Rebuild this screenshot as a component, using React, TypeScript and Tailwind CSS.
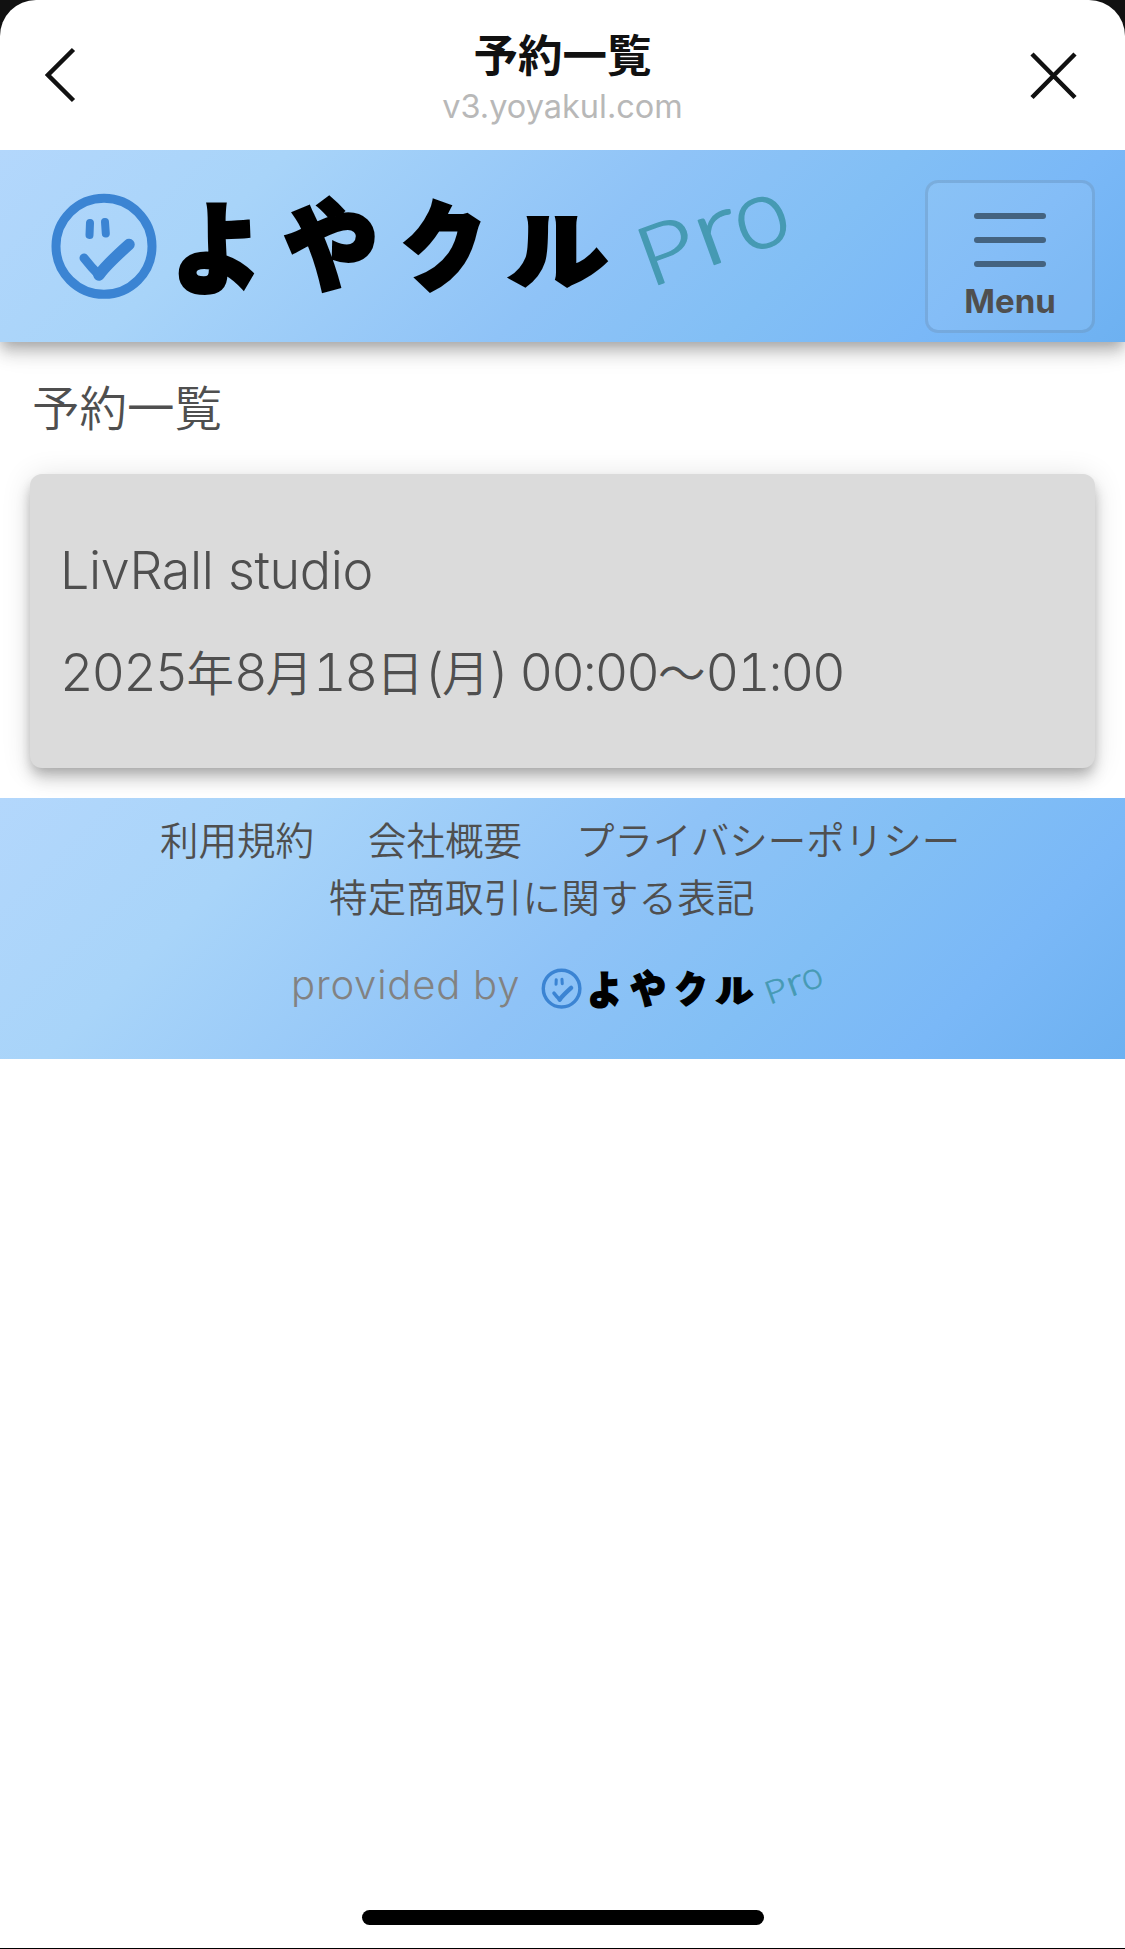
const gradient =
    "bg-[linear-gradient(135deg,#b3d7fc_0%,#a8d4f9_22%,#8fc3f7_52%,#82bff5_69%,#7ab8f7_84%,#6db1f1_100%)]";
const elevation =
    "shadow-[0_6px_12px_-3px_rgba(0,0,0,0.2),0_12px_15px_0_rgba(0,0,0,0.14),0_3px_30px_0_rgba(0,0,0,0.12)]";

function Logo({ className }: { className: string }) {
    return (
        <svg className={`overflow-visible ${className}`} viewBox="50 190 740 112" preserveAspectRatio="none">
            <g fill="none" stroke="#3b84d3" strokeLinecap="round" strokeLinejoin="round">
                <circle cx="104" cy="246.3" r="48" strokeWidth="9" />
                <path d="M90 223 L89.5 235 M105 222 L105.8 233.5" strokeWidth="8" />
                <path d="M84 258 Q91 267 99 275" strokeWidth="9" />
                <path d="M99 275 Q106 265 129 244.500" strokeWidth="11.500" />
            </g>
            <g
                fill="#000"
                stroke="#000"
                strokeWidth="4"
                className="font-['Noto_Sans_CJK_JP',sans-serif] text-[100px] font-black"
            >
                <text transform="translate(172 286) scale(0.9 1)">よ</text>
                <text transform="translate(284 283) scale(0.94 1)">や</text>
                <text transform="translate(404 283) skewX(4) scale(0.86 0.98)">ク</text>
                <text transform="translate(508 281) scale(1 0.82)">ル</text>
            </g>
            <g
                fill="#469ab3"
                stroke="#469ab3"
                strokeWidth="1.4"
                strokeLinejoin="round"
                transform="translate(660.500 284) rotate(-20)"
                className="font-['Lato',sans-serif] font-light"
            >
                <text transform="translate(-12 0) scale(1.22 1)" className="text-[82px]">P</text>
                <text transform="translate(47 0) scale(1.35 1)" className="text-[94px]">r</text>
                <text transform="translate(89 2)" className="text-[99px]">o</text>
            </g>
        </svg>
    );
}

function TitleBar() {
    return (
        <div className="relative z-10 bg-[#111]">
            <div className="flex h-[150px] justify-between rounded-t-[36px] bg-white pr-[48px] pl-[45px]">
                <svg className="mt-[47px] h-14 w-12" viewBox="0 0 48 56" fill="none" stroke="#111" strokeWidth="4.5">
                    <path d="M28.500 2.500 L3 28 L28.500 53.500" />
                </svg>
                <div className="flex flex-col items-center pl-[3px]">
                    <h1 className="mt-[26px] font-['Noto_Sans_CJK_JP',sans-serif] text-[44.500px] leading-[54px] font-bold text-[#111]">
                        予約一覧
                    </h1>
                    <p className="mt-[2px] font-['Inter',sans-serif] text-[32.500px] leading-[50px] text-[#b8b8b8]">
                        v3.yoyakul.com
                    </p>
                </div>
                <svg className="mt-[52px] h-12 w-12" viewBox="0 0 48 48" fill="none" stroke="#111" strokeWidth="4.5">
                    <path d="M3 2 L46 45.500 M46 2 L3 45.500" />
                </svg>
            </div>
        </div>
    );
}

export default function App() {
    return (
        <div className="flex min-h-screen flex-col border-b border-black bg-white text-[#4f4f4f]">
            <TitleBar />

            <header className={`flex h-48 justify-between pr-[30px] pl-[50px] ${gradient} ${elevation}`}>
                <Logo className="mt-10 h-28 w-[740px]" />
                <button className="mt-[30px] flex h-[153px] w-[170px] flex-col items-center rounded-[13px] border-3 border-[#3c5a78]/20 bg-white/8 pt-[30px]">
                    <span className="flex flex-col gap-[18px]">
                        <span className="h-1.5 w-18 rounded-full bg-[#446380]" />
                        <span className="h-1.5 w-18 rounded-full bg-[#446380]" />
                        <span className="h-1.5 w-18 rounded-full bg-[#446380]" />
                    </span>
                    <span className="mt-[14px] font-['Inter',sans-serif] text-[33px] leading-[40px] font-bold">Menu</span>
                </button>
            </header>

            <main className="px-[30px] pb-[30px] font-['Noto_Sans_CJK_JP',sans-serif] text-[47.500px] font-[350]">
                <h2 className="mt-[28px] mb-[32px] pl-[2px] leading-[72px]">予約一覧</h2>
                <div className={`h-[294px] rounded-xl bg-[#dbdbdb] px-[30px] pt-[61px] ${elevation}`}>
                    <p className="font-['Inter',sans-serif] text-[52px] leading-[72px] tracking-[-0.35px]">LivRall studio</p>
                    <p className="mt-[28px] leading-[72px] whitespace-nowrap [&>span]:font-['Inter',sans-serif] [&>span]:text-[52px] [&>span]:tracking-[-2.050px] [&>span]:tabular-nums">
                        <span>2025</span>年<span>8</span>月<span>18</span>日<span>(</span>月<span>) 00:00</span>～<span>01:00</span>
                    </p>
                </div>
            </main>

            <footer className={`relative h-[261px] pt-[12px] ${gradient}`}>
                <div className="font-['Noto_Sans_CJK_JP',sans-serif] text-[38.500px] leading-[57px] font-[350]">
                    <div className="flex gap-[54px] pl-[160px]">
                        <a>利用規約</a>
                        <a>会社概要</a>
                        <a>プライバシーポリシー</a>
                    </div>
                    <div className="pl-[329px] tracking-[0.2px]">
                        <a>特定商取引に関する表記</a>
                    </div>
                </div>
                <div className="mt-[31px] flex items-center pl-[291px]">
                    <span className="w-[250px] font-['Inter',sans-serif] text-[40px] leading-[60px] font-light tracking-[0.8px] text-[#828282]">
                        provided by
                    </span>
                    <Logo className="mt-[7px] h-[43px] w-[282px]" />
                </div>
            </footer>

            <div className="mx-auto mt-auto mb-[23px] h-[15px] w-[402px] rounded-full bg-black" />
        </div>
    );
}
